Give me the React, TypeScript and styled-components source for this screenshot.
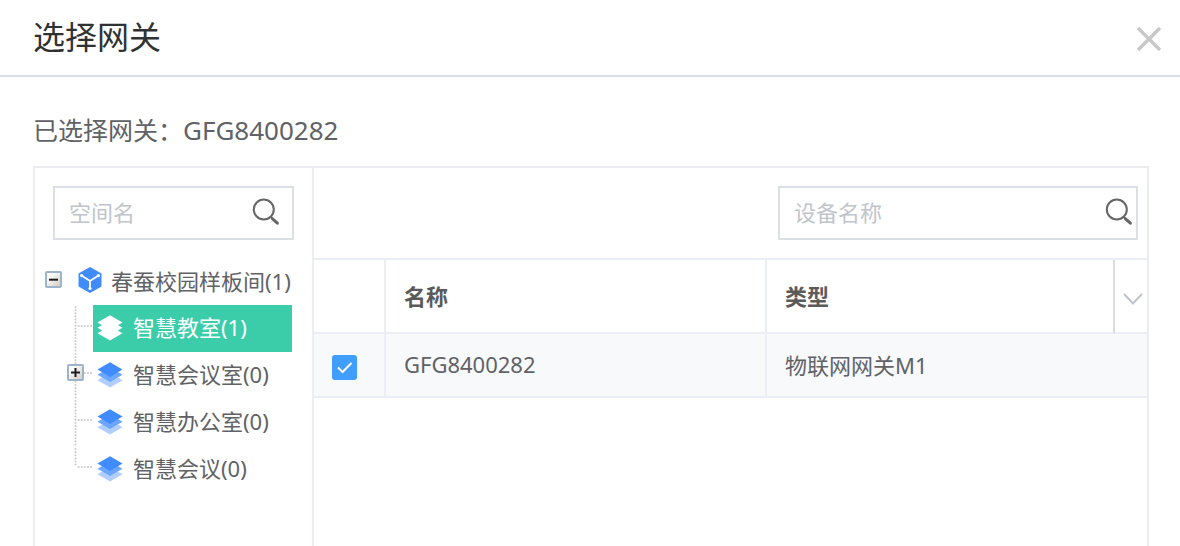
import React, { useState } from "react";
import styled, { createGlobalStyle } from "styled-components";

const GlobalStyle = createGlobalStyle`
  *, *::before, *::after { box-sizing: border-box; }
  body {
    margin: 0;
    background: #fff;
    color: #606266;
    font-family: "Noto Sans", "Noto Sans CJK SC", sans-serif;
    font-size: 22px;
  }
  button, input { font: inherit; color: inherit; }
  svg { display: block; }
`;

const Dialog = styled.div`
  display: flex;
  flex-direction: column;
  height: 100vh;
  overflow: hidden;
`;

const Header = styled.header`
  display: flex;
  align-items: center;
  justify-content: space-between;
  flex: none;
  height: 77px;
  padding: 3px 18px 0 33px;
  border-bottom: 2px solid #dcdfe6;
`;

const Title = styled.h1`
  margin: 0 0 5px;
  font-size: 32px;
  line-height: 48px;
  font-weight: 400;
  color: #303133;
`;

const IconButton = styled.button`
  flex: none;
  padding: 0;
  border: 0;
  background: none;
  cursor: pointer;
`;

const Body = styled.main`
  display: flex;
  flex-direction: column;
  flex: 1;
  min-height: 0;
  padding: 35px 31px 0 33px;
`;

const Selected = styled.p`
  flex: none;
  margin: 0 0 18px;
  font-size: 25px;
  line-height: 36px;
`;

const SelectedValue = styled.span`
  font-size: 26px;
`;

const Panels = styled.div`
  display: flex;
  flex: 1;
  min-height: 0;
  border: 2px solid #ebecef;
  border-bottom: 0;
`;

const Sidebar = styled.aside`
  flex: none;
  width: 279px;
  padding-top: 18px;
  border-right: 2px solid #ebeef5;
`;

const Content = styled.section`
  flex: 1;
  min-width: 0;
`;

const SidebarSearch = styled.div`
  padding: 0 18px;
  margin-bottom: 18px;
`;

const Toolbar = styled.div`
  display: flex;
  justify-content: flex-end;
  padding: 18px 9px;
`;

const SearchBox = styled.form<{ $width: string; $end: number }>`
  display: flex;
  align-items: center;
  width: ${(p) => p.$width};
  height: 54px;
  padding: 0 ${(p) => p.$end}px 3px 14px;
  border: 2px solid #dcdfe6;
`;

const SearchInput = styled.input`
  flex: 1;
  min-width: 0;
  height: 32px;
  padding: 0;
  border: 0;
  outline: 0;
  background: none;
  &::placeholder { color: #c0c4cc; opacity: 1; }
`;

const Tree = styled.ul`
  margin: 0;
  padding: 0;
  list-style: none;
`;

const RootRow = styled.div`
  display: flex;
  align-items: center;
  height: 47px;
  padding: 0 0 4px 10px;
`;

const RootIcon = styled.span`
  margin: 0 9px 0 16px;
`;

const ChildRow = styled.li`
  display: flex;
  height: 47px;
  padding: 0 20px 0 32px;
`;

const Branch = styled.span`
  position: relative;
  flex: none;
  width: 26px;
`;

const BranchToggle = styled(IconButton)`
  position: absolute;
  left: 0;
  top: 12px;
`;

const Node = styled.button<{ $active: boolean }>`
  display: flex;
  align-items: center;
  flex: 1;
  gap: 10px;
  min-width: 0;
  padding: 0 4px 1px;
  border: 0;
  white-space: nowrap;
  cursor: pointer;
  background: ${(p) => (p.$active ? "#3bcdaa" : "none")};
  color: ${(p) => (p.$active ? "#fff" : "#606266")};
`;

const NodeLabel = styled.span`
  padding-bottom: 4px;
`;

const Table = styled.table`
  width: 100%;
  table-layout: fixed;
  border-collapse: separate;
  border-spacing: 0;
  border-top: 2px solid #ebeef5;
`;

const HeadCell = styled.th<{ $width?: number; $line?: string }>`
  width: ${(p) => (p.$width ? `${p.$width}px` : "auto")};
  height: 74px;
  padding: 0 18px 3px;
  border-right: 2px solid ${(p) => p.$line ?? "#ebeef5"};
  border-bottom: 2px solid #ebeef5;
  text-align: left;
  font-weight: 700;
  color: #5a5a5a;
`;

const MenuCell = styled(HeadCell)`
  padding: 2px 0 0 8px;
  border-right: 0;
`;

const Cell = styled.td<{ $last?: boolean }>`
  height: 64px;
  padding: 0 18px 3px;
  background: #f8f9fb;
  border-right: ${(p) => (p.$last ? 0 : "2px solid #ebeef5")};
  border-bottom: 2px solid #ebeef5;
`;

const Check = styled.label`
  display: grid;
  width: 25px;
  height: 25px;
  margin-top: 7px;
  > * { grid-area: 1 / 1; }
  svg { pointer-events: none; }
`;

const CheckInput = styled.input`
  appearance: none;
  width: 25px;
  height: 25px;
  margin: 0;
  border: 2px solid #dcdfe6;
  border-radius: 3px;
  background: #fff;
  &:checked { background: #409eff; border-color: #409eff; }
`;

const SearchIcon = () => (
  <svg width="28" height="28" viewBox="0 0 28 28" fill="none" stroke="#666">
    <circle cx="11.8" cy="11.5" r="10" strokeWidth="2" />
    <path d="M19 19L21 21.2" strokeWidth="2" />
    <path d="M20.5 20.8L25.4 25.2" strokeWidth="3" strokeLinecap="round" />
  </svg>
);

const ToggleIcon = ({ open }: { open: boolean }) => (
  <svg width="17" height="17" viewBox="0 0 17 17">
    <defs>
      <linearGradient id="toggleFace" x1="0" y1="0" x2="1" y2="1">
        <stop offset="0.3" stopColor="#fbfaf8" />
        <stop offset="1" stopColor="#cfc8bd" />
      </linearGradient>
    </defs>
    <rect x="1" y="1" width="15" height="15" rx="1" fill="url(#toggleFace)" stroke="#9db5ca" strokeWidth="2" />
    <path d={open ? "M4 8.7H13" : "M4 8.5H13M8.5 4V13"} stroke="#1c1c1c" strokeWidth="2" />
  </svg>
);

const CubeIcon = () => (
  <svg width="24" height="26" viewBox="0 0 24 26">
    <path d="M12 0L23.5 6.5V19.5L12 26L0.5 19.5V6.5Z" fill="#408cff" />
    <path d="M3.5 8.5L12 14L20.5 8.5M12 14V22" fill="none" stroke="#fff" strokeWidth="1.8" />
    <g fill="#fff">
      <circle cx="3.6" cy="8.6" r="1.6" />
      <circle cx="20.4" cy="8.6" r="1.6" />
      <circle cx="12" cy="21.5" r="1.6" />
    </g>
  </svg>
);

const LayersIcon = ({ active }: { active: boolean }) => (
  <svg width="26" height="26" viewBox="0 0 26 26">
    <path d="M0.5 18.3L13 11L25.5 18.3L13 25.6Z" fill={active ? "#fff" : "#b0cfff"} />
    <path d="M0.5 12.8L13 5.5L25.5 12.8L13 20.1Z" fill={active ? "#fff" : "#6ba6ff"} />
    <path d="M0.5 7.6L13 0.3L25.5 7.6L13 14.9Z" fill={active ? "#fff" : "#408cff"} />
  </svg>
);

const BranchLines = ({ last }: { last: boolean }) => (
  <svg
    width="26"
    height="47"
    viewBox="0 0 26 47"
    fill="none"
    stroke="#cbcbcb"
    strokeWidth="2"
    strokeLinecap="round"
    strokeDasharray="0.1 3"
  >
    <path d={last ? "M8.5 3V21" : "M8.5 2V46"} />
    <path d="M11.6 21H25" />
  </svg>
);

const spaces = [
  { name: "智慧教室(1)", expandable: false },
  { name: "智慧会议室(0)", expandable: true },
  { name: "智慧办公室(0)", expandable: false },
  { name: "智慧会议(0)", expandable: false },
];

export default function App() {
  const [active, setActive] = useState(0);
  const [checked, setChecked] = useState(true);

  return (
    <Dialog>
      <GlobalStyle />
      <Header>
        <Title>选择网关</Title>
        <IconButton aria-label="关闭">
          <svg width="26" height="26" viewBox="0 0 26 26" stroke="#c8c8c8" strokeWidth="3.4">
            <path d="M2 2L24 24M24 2L2 24" />
          </svg>
        </IconButton>
      </Header>
      <Body>
        <Selected>
          已选择网关：<SelectedValue>GFG8400282</SelectedValue>
        </Selected>
        <Panels>
          <Sidebar>
            <SidebarSearch>
              <SearchBox $width="100%" $end={12} onSubmit={(e) => e.preventDefault()}>
                <SearchInput aria-label="空间名" placeholder="空间名" />
                <IconButton aria-label="搜索空间"><SearchIcon /></IconButton>
              </SearchBox>
            </SidebarSearch>
            <Tree>
              <li>
                <RootRow>
                  <IconButton aria-label="收起"><ToggleIcon open /></IconButton>
                  <RootIcon><CubeIcon /></RootIcon>
                  春蚕校园样板间(1)
                </RootRow>
                <Tree>
                  {spaces.map((s, i) => (
                    <ChildRow key={s.name}>
                      <Branch>
                        <BranchLines last={i === spaces.length - 1} />
                        {s.expandable && (
                          <BranchToggle aria-label="展开"><ToggleIcon open={false} /></BranchToggle>
                        )}
                      </Branch>
                      <Node $active={i === active} onClick={() => setActive(i)}>
                        <LayersIcon active={i === active} />
                        <NodeLabel>{s.name}</NodeLabel>
                      </Node>
                    </ChildRow>
                  ))}
                </Tree>
              </li>
            </Tree>
          </Sidebar>
          <Content>
            <Toolbar>
              <SearchBox $width="360px" $end={3} onSubmit={(e) => e.preventDefault()}>
                <SearchInput aria-label="设备名称" placeholder="设备名称" />
                <IconButton aria-label="搜索设备"><SearchIcon /></IconButton>
              </SearchBox>
            </Toolbar>
            <Table>
              <thead>
                <tr>
                  <HeadCell $width={72} />
                  <HeadCell $width={381}>名称</HeadCell>
                  <HeadCell $line="#dcdcdf">类型</HeadCell>
                  <MenuCell $width={32}>
                    <IconButton aria-label="列设置">
                      <svg width="20" height="14" viewBox="0 0 20 14" fill="none" stroke="#c0c4cc" strokeWidth="2">
                        <path d="M1 2L10 11.5L19 2" />
                      </svg>
                    </IconButton>
                  </MenuCell>
                </tr>
              </thead>
              <tbody>
                <tr>
                  <Cell>
                    <Check>
                      <CheckInput
                        type="checkbox"
                        aria-label="选择 GFG8400282"
                        checked={checked}
                        onChange={(e) => setChecked(e.target.checked)}
                      />
                      {checked && (
                        <svg width="25" height="25" viewBox="0 0 25 25" fill="none" stroke="#fff" strokeWidth="2">
                          <path d="M6 12.5L10.5 17L19.5 8" />
                        </svg>
                      )}
                    </Check>
                  </Cell>
                  <Cell>GFG8400282</Cell>
                  <Cell $last colSpan={2}>物联网网关M1</Cell>
                </tr>
              </tbody>
            </Table>
          </Content>
        </Panels>
      </Body>
    </Dialog>
  );
}
